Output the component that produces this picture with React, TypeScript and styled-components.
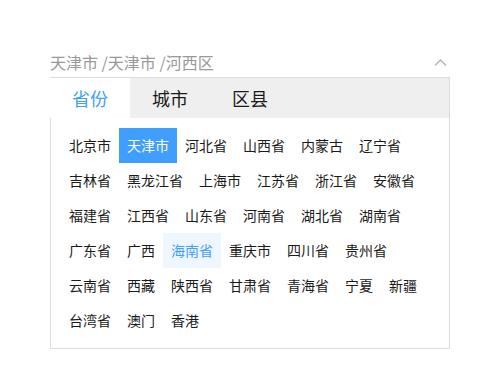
import { useState } from 'react';
import styled, { createGlobalStyle } from 'styled-components';

const GlobalStyle = createGlobalStyle`
  body {
    margin: 0;
    background: #ffffff;
    font-family: "Microsoft YaHei", "Noto Sans CJK SC", sans-serif;
  }
`;

const provinces = [
  '北京市', '天津市', '河北省', '山西省', '内蒙古', '辽宁省',
  '吉林省', '黑龙江省', '上海市', '江苏省', '浙江省', '安徽省',
  '福建省', '江西省', '山东省', '河南省', '湖北省', '湖南省',
  '广东省', '广西', '海南省', '重庆市', '四川省', '贵州省',
  '云南省', '西藏', '陕西省', '甘肃省', '青海省', '宁夏', '新疆',
  '台湾省', '澳门', '香港',
];

const tabs = ['省份', '城市', '区县'];

const App = () => {
  const [activeTab, setActiveTab] = useState(0);
  const selected = '天津市';
  const hovered = '海南省';

  return (
    <>
      <GlobalStyle />
      <Page>
        <Picker>
          <Header>
            <HeaderText>天津市 /天津市 /河西区</HeaderText>
            <Chevron viewBox="0 0 13 7">
              <path d="M1 6.5 L6.5 1 L12 6.5" />
            </Chevron>
          </Header>
          <TabBar>
            {tabs.map((t, i) => (
              <Tab key={t} $active={i === activeTab} onClick={() => setActiveTab(i)}>
                {t}
              </Tab>
            ))}
          </TabBar>
          <Panel>
            {provinces.map((p) => (
              <Item key={p} $selected={p === selected} $hover={p === hovered}>
                {p}
              </Item>
            ))}
          </Panel>
        </Picker>
      </Page>
    </>
  );
};
export default App;

const Page = styled.div`
  padding: 47px 0 0 50px;
`;

const Picker = styled.div`
  width: 400px;
`;

const Header = styled.div`
  height: 30px;
  display: flex;
  align-items: center;
  justify-content: space-between;
  border-bottom: 1px solid #dcdcdc;
`;

const HeaderText = styled.span`
  font-size: 16px;
  color: #999999;
  line-height: 30px;
`;

const Chevron = styled.svg`
  width: 13px;
  height: 7px;
  margin-right: 3px;
  fill: none;
  stroke: #b4b4b4;
  stroke-width: 1.4;
`;

const TabBar = styled.div`
  display: flex;
  height: 40px;
  background: #efefef;
  border-right: 1px solid #dcdcdc;
`;

const Tab = styled.div<{ $active: boolean }>`
  width: 80px;
  display: flex;
  align-items: center;
  justify-content: center;
  font-size: 18px;
  cursor: pointer;
  color: ${(p) => (p.$active ? '#409eff' : '#1a1a1a')};
  background: ${(p) => (p.$active ? '#ffffff' : 'transparent')};
`;

const Panel = styled.div`
  display: flex;
  flex-wrap: wrap;
  align-content: flex-start;
  padding: 10px;
  border: 1px solid #dcdcdc;
  border-top: none;
`;

const Item = styled.div<{ $selected: boolean; $hover: boolean }>`
  height: 35px;
  line-height: 35px;
  padding: 0 8px;
  font-size: 14px;
  white-space: nowrap;
  cursor: pointer;
  color: ${(p) => (p.$selected ? '#ffffff' : p.$hover ? '#409eff' : '#1a1a1a')};
  background: ${(p) => (p.$selected ? '#409eff' : p.$hover ? '#eef6ff' : 'transparent')};
`;
